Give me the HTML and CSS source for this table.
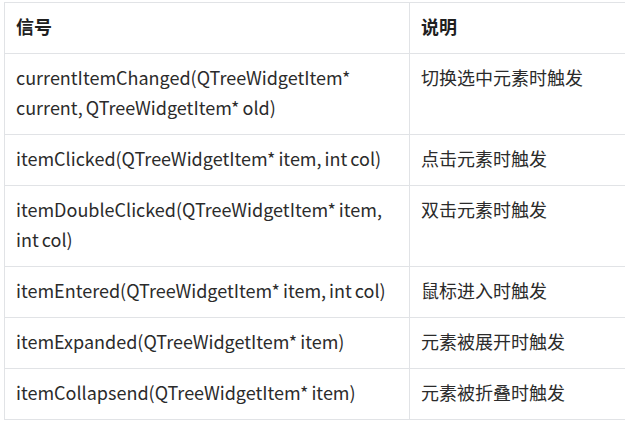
FILE: index.html
```html
<!DOCTYPE html>
<html lang="zh-CN">
<head>
    <meta charset="UTF-8">
    <meta name="viewport" content="width=device-width, initial-scale=1.0">
    <title>QTreeWidget 信号</title>
    <link rel="stylesheet" href="styles.css">
</head>
<body>
    <table class="signal-table">
        <thead>
            <tr>
                <th class="col-signal">信号</th>
                <th class="col-desc">说明</th>
            </tr>
        </thead>
        <tbody>
            <tr>
                <td>currentItemChanged(QTreeWidgetItem* current, QTreeWidgetItem* old)</td>
                <td>切换选中元素时触发</td>
            </tr>
            <tr>
                <td>itemClicked(QTreeWidgetItem* item, int col)</td>
                <td>点击元素时触发</td>
            </tr>
            <tr>
                <td>itemDoubleClicked(QTreeWidgetItem* item, int col)</td>
                <td>双击元素时触发</td>
            </tr>
            <tr>
                <td>itemEntered(QTreeWidgetItem* item, int col)</td>
                <td>鼠标进入时触发</td>
            </tr>
            <tr>
                <td>itemExpanded(QTreeWidgetItem* item)</td>
                <td>元素被展开时触发</td>
            </tr>
            <tr>
                <td>itemCollapsend(QTreeWidgetItem* item)</td>
                <td>元素被折叠时触发</td>
            </tr>
        </tbody>
    </table>
</body>
</html>
```

FILE: styles.css
```css
* {
    margin: 0;
    padding: 0;
    box-sizing: border-box;
}

body {
    font-family: 'Noto Sans CJK SC', 'Noto Sans', sans-serif;
    background: #fff;
    color: #2b2b2b;
    padding: 2px 0 0 4px;
    overflow: hidden;
}

.signal-table {
    border-collapse: collapse;
    width: 660px;
    table-layout: fixed;
    font-size: 18px;
    line-height: 30px;
}

.col-signal {
    width: 405px;
}

th, td {
    border: 1px solid #e1e3e6;
    padding: 8px 11px 12px;
    text-align: left;
    vertical-align: top;
    word-spacing: -1px;
}

th {
    font-weight: 700;
    color: #1f1f1f;
}
```
